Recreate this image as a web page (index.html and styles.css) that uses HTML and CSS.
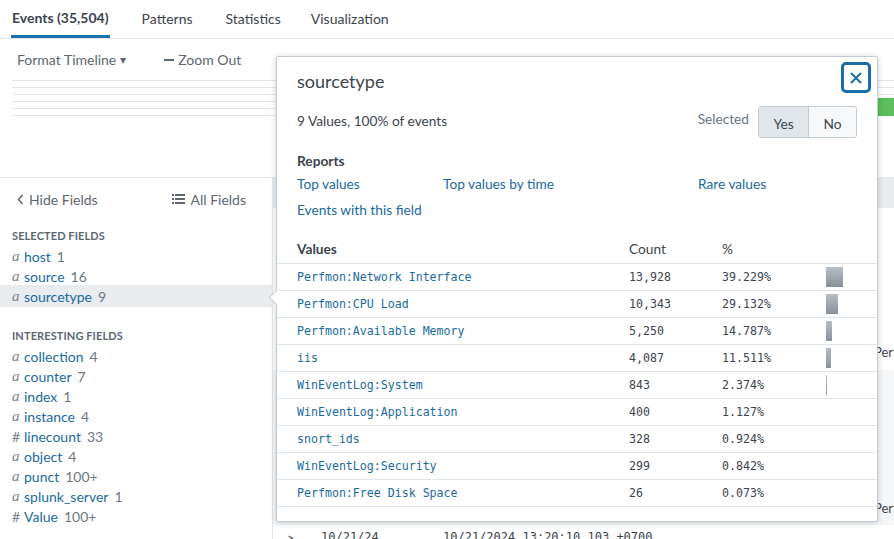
FILE: index.html
```html
<!DOCTYPE html>
<html>
<head>
<meta charset="utf-8">
<link rel="stylesheet" href="styles.css">
</head>
<body>
<div class="page">
  <nav class="tabs">
    <span class="tab active">Events (35,504)</span>
    <span class="tab">Patterns</span>
    <span class="tab">Statistics</span>
    <span class="tab">Visualization</span>
  </nav>

  <section class="timeline">
    <div class="tl-toolbar">
      <span class="tl-btn">Format Timeline <span class="caret">&#9662;</span></span>
      <span class="tl-btn zoom"><span class="dash"></span>Zoom Out</span>
    </div>
    <div class="tl-chart">
      <div class="gridline"></div>
      <div class="gridline"></div>
      <div class="gridline"></div>
      <div class="gridline"></div>
      <div class="gridline"></div>
      <div class="gridline"></div>
      <div class="tl-bar"></div>
    </div>
  </section>

  <section class="body">
    <aside class="sidebar">
      <div class="sb-tools">
        <span class="sb-link"><svg class="chev" width="7" height="11" viewBox="0 0 7 11"><path d="M5.5 1 L1.5 5.5 L5.5 10" fill="none" stroke="#5c6773" stroke-width="1.5"/></svg>Hide Fields</span>
        <span class="sb-link"><svg class="list-ico" width="13" height="10" viewBox="0 0 13 10"><rect x="0" y="0" width="2" height="2" fill="#5c6773"/><rect x="3" y="0" width="10" height="2" fill="#5c6773"/><rect x="0" y="4" width="2" height="2" fill="#5c6773"/><rect x="3" y="4" width="10" height="2" fill="#5c6773"/><rect x="0" y="8" width="2" height="2" fill="#5c6773"/><rect x="3" y="8" width="10" height="2" fill="#5c6773"/></svg>All Fields</span>
      </div>
      <h4 class="sb-head">SELECTED FIELDS</h4>
      <ul class="fields">
        <li><i class="ft">a</i><span class="fn">host</span><span class="fc">1</span></li>
        <li><i class="ft">a</i><span class="fn">source</span><span class="fc">16</span></li>
        <li class="active"><i class="ft">a</i><span class="fn">sourcetype</span><span class="fc">9</span></li>
      </ul>
      <h4 class="sb-head second">INTERESTING FIELDS</h4>
      <ul class="fields">
        <li><i class="ft">a</i><span class="fn">collection</span><span class="fc">4</span></li>
        <li><i class="ft">a</i><span class="fn">counter</span><span class="fc">7</span></li>
        <li><i class="ft">a</i><span class="fn">index</span><span class="fc">1</span></li>
        <li><i class="ft">a</i><span class="fn">instance</span><span class="fc">4</span></li>
        <li><span class="ft num">#</span><span class="fn">linecount</span><span class="fc">33</span></li>
        <li><i class="ft">a</i><span class="fn">object</span><span class="fc">4</span></li>
        <li><i class="ft">a</i><span class="fn">punct</span><span class="fc">100+</span></li>
        <li><i class="ft">a</i><span class="fn">splunk_server</span><span class="fc">1</span></li>
        <li><span class="ft num">#</span><span class="fn">Value</span><span class="fc">100+</span></li>
      </ul>
    </aside>

    <main class="events">
      <div class="ev-head"></div>
      <div class="ev-row first"><span class="ev-text">Perfmon</span></div>
      <div class="ev-row shaded"><span class="ev-text">Perfmon</span></div>
      <div class="ev-row last">
        <span class="ev-exp">&gt;</span>
        <span class="ev-date">10/21/24</span>
        <span class="ev-time">10/21/2024 13:20:10.103 +0700</span>
      </div>
    </main>
  </section>

  <div class="popover">
    <span class="arrow"></span>
    <button class="close" aria-label="Close"><svg width="12" height="12" viewBox="0 0 12 12"><path d="M1 1 L11 11 M11 1 L1 11" stroke="#1a6aa0" stroke-width="1.8" fill="none"/></svg></button>
    <h2 class="pv-title">sourcetype</h2>
    <div class="pv-summary">
      <span class="pv-count">9 Values, 100% of events</span>
      <div class="pv-selected">
        <span class="sel-label">Selected</span>
        <div class="toggle">
          <span class="tg on">Yes</span>
          <span class="tg">No</span>
        </div>
      </div>
    </div>
    <h3 class="pv-reports">Reports</h3>
    <div class="pv-links">
      <a>Top values</a>
      <a>Top values by time</a>
      <a>Rare values</a>
      <a>Events with this field</a>
    </div>
    <div class="vtable">
      <div class="vrow vhead"><span class="c1">Values</span><span class="c2">Count</span><span class="c3">%</span><span class="c4"></span></div>
      <div class="vrow"><span class="c1 v">Perfmon:Network Interface</span><span class="c2 m">13,928</span><span class="c3 m">39.229%</span><span class="c4"><span class="bar" style="width:17px"></span></span></div>
      <div class="vrow"><span class="c1 v">Perfmon:CPU Load</span><span class="c2 m">10,343</span><span class="c3 m">29.132%</span><span class="c4"><span class="bar" style="width:12px"></span></span></div>
      <div class="vrow"><span class="c1 v">Perfmon:Available Memory</span><span class="c2 m">5,250</span><span class="c3 m">14.787%</span><span class="c4"><span class="bar" style="width:6px"></span></span></div>
      <div class="vrow"><span class="c1 v">iis</span><span class="c2 m">4,087</span><span class="c3 m">11.511%</span><span class="c4"><span class="bar" style="width:5px"></span></span></div>
      <div class="vrow"><span class="c1 v">WinEventLog:System</span><span class="c2 m">843</span><span class="c3 m">2.374%</span><span class="c4"><span class="bar" style="width:1px"></span></span></div>
      <div class="vrow"><span class="c1 v">WinEventLog:Application</span><span class="c2 m">400</span><span class="c3 m">1.127%</span><span class="c4"></span></div>
      <div class="vrow"><span class="c1 v">snort_ids</span><span class="c2 m">328</span><span class="c3 m">0.924%</span><span class="c4"></span></div>
      <div class="vrow"><span class="c1 v">WinEventLog:Security</span><span class="c2 m">299</span><span class="c3 m">0.842%</span><span class="c4"></span></div>
      <div class="vrow"><span class="c1 v">Perfmon:Free Disk Space</span><span class="c2 m">26</span><span class="c3 m">0.073%</span><span class="c4"></span></div>
    </div>
  </div>
</div>
</body>
</html>
```

FILE: styles.css
```css
* { box-sizing: border-box; }
html, body { margin: 0; padding: 0; }
body {
  font-family: Lato, "Open Sans", sans-serif;
  font-size: 13px;
  color: #3c444d;
  background: #fff;
  width: 894px;
  height: 539px;
  overflow: hidden;
}
.page { position: relative; width: 894px; height: 539px; overflow: hidden; }

/* tabs */
.tabs {
  display: flex;
  height: 39px;
  border-bottom: 1px solid #e1e6eb;
  padding-left: 11px;
}
.tab {
  font-size: 14px;
  color: #3c444d;
  line-height: 38px;
  margin-right: 31px;
  padding: 0 1px;
}
.tab:nth-child(3) { margin-right: 28px; }
.tab.active {
  font-weight: 700;
  border-bottom: 3px solid #1a72b0;
  line-height: 35px;
  height: 38px;
}

/* timeline */
.timeline { height: 139px; border-bottom: 1px solid #e1e6eb; }
.tl-toolbar {
  display: flex;
  height: 35px;
  align-items: flex-start;
  padding: 11px 0 0 17px;
  gap: 38px;
}
.tl-btn { font-size: 14px; line-height: 20px; color: #5c6773; display: flex; align-items: center; }
.caret { font-size: 12px; margin-left: 4px; }
.dash { width: 10px; height: 2px; background: #5c6773; margin-right: 4px; display: inline-block; }
.tl-chart { position: relative; margin: 0 0 0 12px; }
.gridline { height: 7px; border-bottom: 1px solid #e4e7ea; }
.tl-bar { position: absolute; left: 860px; width: 40px; top: 24px; height: 18px; background: #5cbe5c; }

/* body */
.body { display: flex; height: 361px; }
.sidebar {
  width: 273px;
  flex: none;
  border-right: 1px solid #e1e6eb;
}
.sb-tools {
  display: flex;
  justify-content: space-between;
  padding: 11px 26px 0 17px;
  height: 43px;
}
.sb-link { font-size: 14px; color: #5c6773; display: flex; align-items: center; height: 20px; }
.chev { margin-right: 5px; }
.list-ico { margin-right: 6px; }
.sb-head {
  margin: 8px 0 3px 12px;
  font-size: 11px;
  font-weight: 700;
  color: #5c6773;
  letter-spacing: 0.1px;
  line-height: 14px;
}
.sb-head.second { margin-top: 23px; }
.fields { list-style: none; margin: 0; padding: 0; }
.fields li {
  height: 20px;
  display: flex;
  align-items: center;
  padding-left: 12px;
  font-size: 14px;
}
.fields li.active { background: #e9ecee; height: 22px; margin: -1px 0; }
.ft {
  font-family: "Liberation Serif", serif;
  font-style: italic;
  color: #7a838c;
  width: 12px;
  font-size: 15px;
}
.ft.num { font-style: normal; font-family: Lato, sans-serif; font-size: 14px; }
.fn { color: #1a6aa0; margin-right: 6px; }
.fc { color: #6b7785; }

/* events behind */
.events { flex: 1; display: flex; flex-direction: column; }
.ev-head { height: 30px; background: #e9ecef; flex: none; }
.ev-row { position: relative; flex: none; }
.ev-row.first { height: 162px; }
.ev-row.shaded { height: 155px; background: #f5f6f8; }
.ev-text { position: absolute; left: 601px; bottom: 9px; font-size: 13px; color: #3c444d; }
.ev-row.first .ev-text { bottom: 10px; }
.ev-row.last { height: 30px; display: flex; align-items: flex-start; padding-top: 5px; font-family: "DejaVu Sans Mono", monospace; font-size: 12px; color: #3c444d; }
.ev-exp { margin-left: 14px; width: 34px; font-family: Lato, sans-serif; }
.ev-date { width: 122px; }

/* popover */
.popover {
  position: absolute;
  left: 276px;
  top: 56px;
  width: 602px;
  height: 466px;
  background: #fff;
  border: 1px solid #c3cbd4;
  box-shadow: 0 1px 6px rgba(0, 0, 0, 0.18);
  border-radius: 2px;
}
.arrow {
  position: absolute;
  left: -6px;
  top: 235px;
  width: 11px;
  height: 11px;
  background: #fff;
  border-left: 1px solid #c3cbd4;
  border-bottom: 1px solid #c3cbd4;
  transform: rotate(45deg);
}
.close {
  position: absolute;
  top: 5px;
  right: 6px;
  width: 30px;
  height: 31px;
  border: 3px solid #1d6ea6;
  border-radius: 5px;
  background: #fff;
  display: flex;
  align-items: center;
  justify-content: center;
  padding: 0;
}
.pv-title {
  margin: 0;
  padding: 12px 20px 0;
  font-size: 18px;
  font-weight: 400;
  line-height: 24px;
  color: #3c444d;
}
.pv-summary {
  display: flex;
  justify-content: space-between;
  align-items: center;
  padding: 0 20px;
  margin-top: 13px;
}
.pv-count { font-size: 13.7px; margin-top: -3px; }
.pv-selected { display: flex; align-items: center; gap: 9px; }
.sel-label { color: #6b7785; font-size: 13.7px; margin-top: -7px; }
.toggle { display: flex; border: 1px solid #c3cbd4; border-radius: 3px; overflow: hidden; height: 32px; }
.tg { width: 47px; display: flex; align-items: center; justify-content: center; background: #f7f8fa; font-size: 13.7px; color: #3c444d; padding-top: 2px; }
.tg.on { background: #e1e6eb; border-right: 1px solid #c3cbd4; width: 50px; }
.pv-reports {
  margin: 13px 0 0;
  padding: 0 20px;
  font-size: 13.7px;
  font-weight: 700;
  line-height: 20px;
}
.pv-links {
  display: grid;
  grid-template-columns: 146px 255px 1fr;
  row-gap: 6px;
  padding: 3px 20px 0;
}
.pv-links a { color: #1a6aa0; font-size: 13.7px; line-height: 20px; }
.vtable { margin-top: 16px; }
.vrow {
  display: flex;
  height: 27px;
  align-items: center;
  border-bottom: 1px solid #e1e6eb;
}
.vhead { height: 28px; padding-bottom: 2px; }
.vhead span { font-size: 13.7px; }
.vhead .c1 { font-weight: 700; }
.c1 { width: 352px; padding-left: 20px; flex: none; }
.c2 { width: 93px; flex: none; }
.c3 { width: 104px; flex: none; }
.c4 { flex: 1; display: flex; align-items: center; }
.v { font-family: "DejaVu Sans Mono", monospace; font-size: 11.6px; color: #1a6aa0; }
.m { font-family: "DejaVu Sans Mono", monospace; font-size: 11.6px; color: #3c444d; }
.bar {
  display: block;
  height: 20px;
  background: linear-gradient(#b8bec6, #87919c);
}
```
